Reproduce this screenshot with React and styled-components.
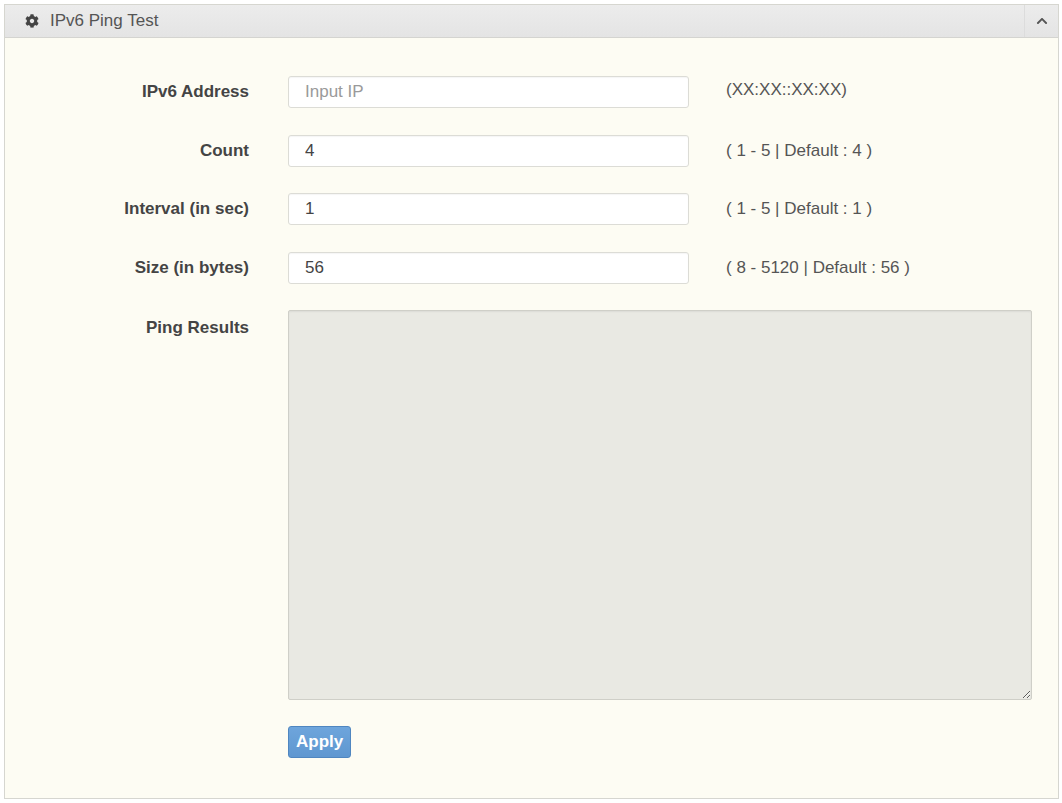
import React from 'react';
import styled, { createGlobalStyle } from 'styled-components';
import { FaCog, FaChevronUp } from 'react-icons/fa';

const GlobalStyle = createGlobalStyle`
  html, body {
    margin: 0;
    padding: 0;
    background: #ffffff;
    font-family: "Liberation Sans", Arial, sans-serif;
  }
`;

const Page = styled.div`
  padding: 4px 3px 2px 4px;
`;

const Panel = styled.section`
  border: 1px solid #d6d6d0;
  background: #fdfcf3;
  height: 795px;
  box-sizing: border-box;
  display: flex;
  flex-direction: column;
`;

const PanelHeader = styled.header`
  display: flex;
  align-items: stretch;
  height: 32px;
  background: linear-gradient(#ececec, #e4e4e4);
  border-bottom: 1px solid #d4d4d0;
`;

const PanelTitle = styled.h2`
  flex: 1;
  margin: 0;
  display: flex;
  align-items: center;
  gap: 11px;
  padding-left: 20px;
  font-size: 17px;
  font-weight: normal;
  color: #555;

  svg {
    width: 14px;
    height: 14px;
    color: #444;
  }
`;

const CollapseButton = styled.button`
  width: 34px;
  border: none;
  border-left: 1px solid #dcdcdc;
  background: transparent;
  display: flex;
  align-items: center;
  justify-content: center;
  padding: 0;
  color: #555;

  svg {
    width: 12px;
    height: 12px;
  }
`;

const Form = styled.form`
  display: grid;
  grid-template-columns: 244px 401px 1fr;
  column-gap: 39px;
  row-gap: 26.5px;
  padding: 38px 26px 0 0;
`;

const Label = styled.label`
  text-align: right;
  font-size: 17px;
  font-weight: bold;
  color: #444;
  line-height: ${(p) => (p.$top ? '36px' : '32px')};
  white-space: nowrap;
`;

const TextInput = styled.input`
  height: 32px;
  box-sizing: border-box;
  border: 1px solid #dcdcd6;
  border-radius: 3px;
  background: #fff;
  padding: 0 16px;
  font-family: inherit;
  font-size: 17px;
  color: #444;
  box-shadow: inset 0 1px 1px rgba(0, 0, 0, 0.04);

  &::placeholder {
    color: #9a9a9a;
  }
`;

const Hint = styled.span`
  font-size: 17px;
  color: #555;
  line-height: ${(p) => (p.$raised ? '28px' : '32px')};
  margin-left: -2px;
  white-space: nowrap;
`;

const Results = styled.textarea`
  grid-column: 2 / 4;
  height: 390px;
  box-sizing: border-box;
  border: 1px solid #cfcfc8;
  border-radius: 2px;
  background: #e9e9e3;
  box-shadow: inset 0 1px 2px rgba(0, 0, 0, 0.06);
  font-family: inherit;
  font-size: 13px;
  resize: vertical;
`;

const Actions = styled.div`
  grid-column: 2 / 4;
  margin-top: -1px;
`;

const ApplyButton = styled.button`
  height: 32px;
  padding: 0 7px;
  border: 1px solid #4f86c0;
  border-radius: 3px;
  background: linear-gradient(#6ea5dc, #5f97d0);
  color: #fff;
  font-family: inherit;
  font-size: 17px;
  font-weight: bold;
`;

const fields = [
  { label: 'IPv6 Address', value: '', placeholder: 'Input IP', hint: '(XX:XX::XX:XX)', raised: true },
  { label: 'Count', value: '4', hint: '( 1 - 5 | Default : 4 )' },
  { label: 'Interval (in sec)', value: '1', hint: '( 1 - 5 | Default : 1 )' },
  { label: 'Size (in bytes)', value: '56', hint: '( 8 - 5120 | Default : 56 )' },
];

const App = () => {
  return (
    <Page>
      <GlobalStyle />
      <Panel>
        <PanelHeader>
          <PanelTitle>
            <FaCog />
            <span>IPv6 Ping Test</span>
          </PanelTitle>
          <CollapseButton type="button">
            <FaChevronUp />
          </CollapseButton>
        </PanelHeader>
        <Form onSubmit={(e) => e.preventDefault()}>
          {fields.map((f) => (
            <React.Fragment key={f.label}>
              <Label>{f.label}</Label>
              <TextInput defaultValue={f.value} placeholder={f.placeholder} />
              <Hint $raised={f.raised}>{f.hint}</Hint>
            </React.Fragment>
          ))}
          <Label $top>Ping Results</Label>
          <Results readOnly />
          <Label />
          <Actions>
            <ApplyButton type="submit">Apply</ApplyButton>
          </Actions>
        </Form>
      </Panel>
    </Page>
  );
};

export default App;
